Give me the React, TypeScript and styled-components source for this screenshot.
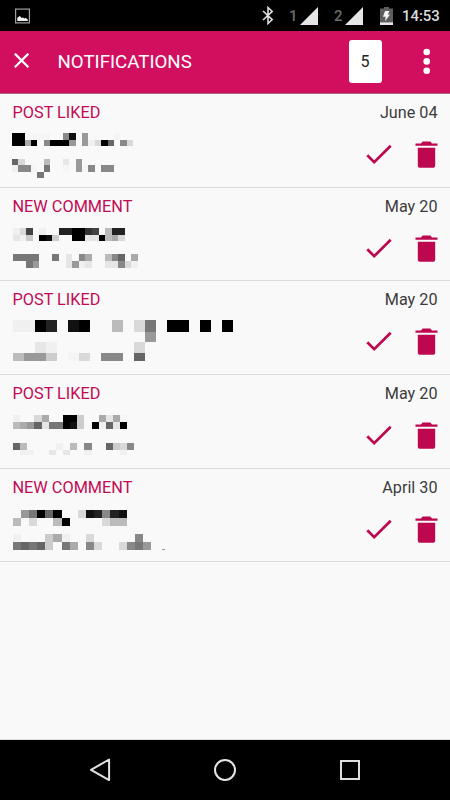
import React from "react";
import styled, { createGlobalStyle } from "styled-components";

const GlobalStyle = createGlobalStyle`
  * { box-sizing: border-box; }
  body { margin: 0; background: #f9f9f9; font-family: Roboto, "Liberation Sans", sans-serif; }
  svg { display: block; flex: none; }
`;

const Screen = styled.div`
  width: 450px;
  height: 800px;
  display: flex;
  flex-direction: column;
  background: #f9f9f9;
  overflow: hidden;
`;

const StatusBar = styled.header`
  height: 31px;
  flex: none;
  display: flex;
  align-items: center;
  justify-content: space-between;
  padding: 0 11px 0 15px;
  background: #000;
`;

const StatusGroup = styled.div`
  display: flex;
  align-items: center;
`;

const SimLabel = styled.span<{ $gap: number }>`
  width: 8px;
  margin-left: ${(p) => p.$gap}px;
  margin-right: 3px;
  font-size: 15px;
  line-height: 16px;
  font-weight: 500;
  color: #6a6a6a;
  text-align: center;
`;

const BatterySlot = styled.div`
  margin-left: 17px;
`;

const Clock = styled.time`
  width: 37px;
  margin-left: 9px;
  padding-top: 1px;
  font-size: 14.9px;
  line-height: 18px;
  font-weight: 500;
  color: #dcdcdc;
  white-space: nowrap;
`;

const AppBar = styled.div`
  height: 63px;
  flex: none;
  display: flex;
  align-items: center;
  padding: 0 19px 2px 14px;
  background: #d20f5f;
  border-bottom: 1px solid #a9647f;
`;

const BarButton = styled.button`
  padding: 0;
  border: 0;
  background: none;
`;

const Title = styled.h1`
  flex: 1;
  margin: 2px 0 0 27.5px;
  font-size: 18.7px;
  line-height: 24px;
  font-weight: 400;
  color: #fff;
`;

const Count = styled.span`
  width: 33px;
  height: 43px;
  margin-right: 41.5px;
  display: flex;
  align-items: center;
  justify-content: center;
  border-radius: 3px;
  background: #fff;
  color: #222;
  font-size: 16px;
`;

const List = styled.ul`
  flex: 1;
  margin: 0;
  padding: 0;
  list-style: none;
  border-bottom: 1px solid #dcdcdc;
`;

const Row = styled.li<{ $height: number }>`
  height: ${(p) => p.$height}px;
  display: grid;
  grid-template-columns: 1fr auto;
  grid-template-rows: 36px 1fr;
  border-bottom: 1px solid #dadada;
`;

const Kind = styled.h2`
  margin: 0;
  padding: 9px 0 0 12.5px;
  font-size: 16.3px;
  line-height: 20px;
  font-weight: 400;
  color: #c20a55;
`;

const DateLabel = styled.time`
  padding: 9px 12.5px 0 0;
  font-size: 16.2px;
  line-height: 20px;
  color: #3c3c3c;
  text-align: right;
`;

const Actions = styled.div`
  display: flex;
  justify-content: flex-end;
  align-items: flex-start;
  gap: 23.3px;
  padding: 11px 12px 0 0;
`;

const NavBar = styled.nav`
  height: 60px;
  flex: none;
  display: flex;
  justify-content: space-between;
  align-items: center;
  padding: 0 87px;
  background: #000;
`;

type Band = { x: number; y: number; cell: number; heights: number[]; rows: string[] };
type Item = { kind: string; date: string; height: number; bands: Band[] };

// Each character is the grey level of one block; a dot leaves the block empty.
const items: Item[] = [
  {
    kind: "POST LIKED", date: "June 04", height: 94,
    bands: [
      { x: 12, y: 3.3, cell: 6.37, heights: [6.4, 6.4], rows: ["00gggg..81.9....g", "00a0.80009.9fd06.8d"] },
      { x: 12, y: 29, cell: 6.37, heights: [6.4, 6.3, 6], rows: ["6d...b..e.9", "f88g.7..g.9g8.88", "....7"] },
    ],
  },
  {
    kind: "NEW COMMENT", date: "May 20", height: 93,
    bands: [
      { x: 13, y: 4, cell: 6.58, heights: [6.6, 6.4], rows: ["fd4.f..220034.b22", "efg.01c..00ee0bad"] },
      { x: 13, y: 4 + 6.6, cell: 6.58, heights: [6.4], rows: ["..c"] },
      { x: 13, y: 30, cell: 6.58, heights: [6.8, 6.8], rows: ["7777..7.e.8a..b86.a", "..79....e9fe..ee8df"] },
    ],
  },
  {
    kind: "POST LIKED", date: "May 20", height: 94,
    bands: [
      { x: 13, y: 3.3, cell: 10.98, heights: [11.4, 10.6, 11, 7.6], rows: ["ff02.10..b.d7.00.0.0", "............9", "..ef.......d", "b99c.gd.88.6"] },
    ],
  },
  {
    kind: "POST LIKED", date: "May 20", height: 94,
    bands: [
      { x: 13, y: 3.7, cell: 7.14, heights: [7.3, 7], rows: ["f..da..00c..aeag", "ba96e7701c.0f6e0"] },
      { x: 13, y: 32, cell: 7.14, heights: [7.3, 4.7], rows: ["6b....f.b.8..6cd8", ".ff..e.e..f....f"] },
    ],
  },
  {
    kind: "NEW COMMENT", date: "April 30", height: 93,
    bands: [
      { x: 12.7, y: 4.7, cell: 8.14, heights: [8, 8], rows: [".97060..d12821", "b.d..b0....dbb"] },
      { x: 12.7, y: 29, cell: 8.14, heights: [8, 7.7], rows: ["f...caf..d.....8", "7676c.7a.8d..d879"] },
      { x: 162, y: 44.3, cell: 3, heights: [1], rows: ["9"] },
    ],
  },
];

const shade = (c: string) => {
  if (c === "g") return "#f5f5f5";
  if (c === "f") return "#f0f0f0";
  if (c === "e") return "#e6e6e6";
  if (c === "d") return "#d9d9d9";
  return `#${c}${c}${c}`;
};

function Mosaic({ bands }: { bands: Band[] }) {
  return (
    <svg width="250" height="52" viewBox="0 0 250 52" shapeRendering="crispEdges" aria-hidden="true">
      {bands.flatMap((band, b) =>
        band.rows.flatMap((row, r) => {
          const y = band.y + band.heights.slice(0, r).reduce((a, h) => a + h, 0);
          return [...row].map((c, i) =>
            c === "." ? null : (
              <rect
                key={`${b}-${r}-${i}`}
                x={band.x + i * band.cell}
                y={y}
                width={band.cell}
                height={band.heights[r]}
                fill={shade(c)}
              />
            ),
          );
        }),
      )}
    </svg>
  );
}

const CheckIcon = () => (
  <svg width="26" height="28" viewBox="0 0 26 28">
    <path d="M1.3 14.3 8.2 21.2 24.7 4.7" fill="none" stroke="#bd0850" strokeWidth="2.7" />
  </svg>
);

const TrashIcon = () => (
  <svg width="23" height="28" viewBox="0 0 23 28" fill="#bd0850">
    <path d="M.5 2.6H6L7.6.4h7.8L17 2.6h5.5v2.2H.5zM2.8 6.8h17.4v17.4q0 2.6-2.6 2.6H5.4q-2.6 0-2.6-2.6z" />
  </svg>
);

const CloseIcon = () => (
  <svg width="16" height="16" viewBox="0 0 16 16">
    <path d="M.8.6 14.4 14.2M14.4.6.8 14.2" stroke="#fff" strokeWidth="2.2" />
  </svg>
);

const MoreIcon = () => (
  <svg width="8" height="27" viewBox="0 0 8 27" fill="#fff">
    <circle cx="3.7" cy="4" r="3.3" />
    <circle cx="3.7" cy="13.4" r="3.3" />
    <circle cx="3.7" cy="22.8" r="3.3" />
  </svg>
);

const PictureIcon = () => (
  <svg width="15" height="16" viewBox="0 0 15 16">
    <rect x=".6" y="1.1" width="13.8" height="13.8" fill="none" stroke="#a2a2a2" strokeWidth="1.2" />
    <path d="M2.3 13V9.8L4.8 8l2 2.1L8 9.5l1.4 1 1.2-.8 2.2 1.8V13z" fill="#eee" />
  </svg>
);

const BluetoothIcon = () => (
  <svg width="12" height="19" viewBox="0 0 12 19">
    <path d="M1 5 10.2 13.6 6 17.5V1.5l4.2 3.9L1 14" fill="none" stroke="#dedede" strokeWidth="1.6" />
  </svg>
);

const SignalIcon = () => (
  <svg width="18" height="18" viewBox="0 0 18 18">
    <path d="M18 0V18H0z" fill="#e6e6e6" />
  </svg>
);

const BatteryIcon = () => (
  <svg width="13" height="18" viewBox="0 0 13 18">
    <path d="M4 0h5v1.6h4V18H0V1.6h4z" fill="#5e5e5e" />
    <path d="M0 15.4h13V18H0z" fill="#e6e6e6" />
    <path d="M5 4h4.5L7.8 7.5H10L5 14.3l.7-4.5H3z" fill="#f4f4f4" />
  </svg>
);

const BackIcon = () => (
  <svg width="26" height="26" viewBox="0 0 26 26">
    <path d="M4 12.8 22.1 2.5V23.1z" fill="none" stroke="#e2e2e2" strokeWidth="2" strokeLinejoin="round" />
  </svg>
);

const HomeIcon = () => (
  <svg width="24" height="24" viewBox="0 0 24 24">
    <circle cx="12" cy="12" r="10" fill="none" stroke="#e4e4e4" strokeWidth="2" />
  </svg>
);

const RecentsIcon = () => (
  <svg width="26" height="26" viewBox="0 0 26 26">
    <rect x="4" y="4" width="18" height="18" fill="none" stroke="#dedede" strokeWidth="2" />
  </svg>
);

export default function App() {
  return (
    <Screen>
      <GlobalStyle />
      <StatusBar>
        <PictureIcon />
        <StatusGroup>
          <BluetoothIcon />
          <SimLabel $gap={15}>1</SimLabel>
          <SignalIcon />
          <SimLabel $gap={16}>2</SimLabel>
          <SignalIcon />
          <BatterySlot>
            <BatteryIcon />
          </BatterySlot>
          <Clock>14:53</Clock>
        </StatusGroup>
      </StatusBar>
      <AppBar>
        <BarButton aria-label="Close"><CloseIcon /></BarButton>
        <Title>NOTIFICATIONS</Title>
        <Count>5</Count>
        <BarButton aria-label="More options"><MoreIcon /></BarButton>
      </AppBar>
      <List>
        {items.map((item, i) => (
          <Row key={i} $height={item.height}>
            <Kind>{item.kind}</Kind>
            <DateLabel>{item.date}</DateLabel>
            <Mosaic bands={item.bands} />
            <Actions>
              <BarButton aria-label="Mark as read"><CheckIcon /></BarButton>
              <BarButton aria-label="Delete"><TrashIcon /></BarButton>
            </Actions>
          </Row>
        ))}
      </List>
      <NavBar>
        <BackIcon />
        <HomeIcon />
        <RecentsIcon />
      </NavBar>
    </Screen>
  );
}
